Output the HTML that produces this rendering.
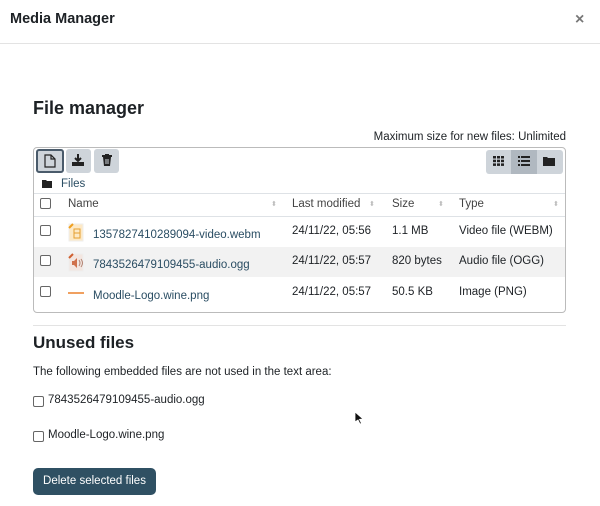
<!DOCTYPE html>
<html><head><meta charset="utf-8"><style>
*{box-sizing:border-box;margin:0;padding:0}
body{width:600px;height:506px;background:#fff;font-family:"Liberation Sans",sans-serif;color:#1d2125;position:relative;overflow:hidden;font-size:11.5px}
.a{position:absolute;white-space:nowrap}
.btn{position:absolute;background:#ced4da;border-radius:3px;height:24px;top:149px}
.cb{position:absolute;width:11px;height:11px;border:1px solid #666;border-radius:2px;background:#fff}
.hl{position:absolute;left:34px;width:531px;height:1px;background:#dee2e6}
.lnk{color:#2a4d63}
.sort{position:absolute;color:#bbb;font-size:7px}
</style></head><body>
<div class="a" style="left:10px;top:11px;font-size:14.5px;font-weight:bold">Media Manager</div>
<div class="a" style="left:575px;top:11px;font-size:16px;color:#777;font-weight:bold">×</div>
<div class="a" style="left:0;top:43px;width:600px;height:1px;background:#e3e3e3"></div>
<div class="a" style="left:33px;top:98px;font-size:18px;font-weight:bold">File manager</div>
<div class="a" style="right:34px;top:131px;font-size:11.5px">Maximum size for new files: Unlimited</div>
<div class="a" style="left:33px;top:147px;width:533px;height:166px;border:1px solid #bbb;border-radius:4px"></div>
<div class="btn" style="left:36px;width:28px;border:2px solid #4a5b6b;background:#ced4da"></div>
<svg class="a" style="left:44px;top:154px" width="12" height="14" viewBox="0 0 12 14"><path d="M1 1h6l4 4v8H1z M7 1v4h4" fill="none" stroke="#222" stroke-width="1.2"/></svg>
<div class="btn" style="left:66px;width:25px"></div>
<svg class="a" style="left:72px;top:154px" width="12" height="12" viewBox="0 0 12 12"><path d="M6 0v6M3 4l3 3 3-3" stroke="#222" stroke-width="2" fill="none"/><rect x="0" y="8" width="12" height="4" fill="#222"/></svg>
<div class="btn" style="left:94px;width:25px"></div>
<svg class="a" style="left:102px;top:154px" width="10" height="12" viewBox="0 0 10 12"><rect x="0" y="1" width="10" height="2" fill="#222"/><rect x="3" y="0" width="4" height="2" fill="#222"/><path d="M1 3h8l-1 9H2z" fill="#222"/><path d="M4 5v5M6 5v5" stroke="#ced4da"/></svg>
<div class="btn" style="left:486px;width:77px;top:150px"></div>
<div class="a" style="left:511px;top:150px;width:26px;height:24px;background:#b0b8c0"></div>
<svg class="a" style="left:493px;top:156px" width="11" height="10"><g fill="#222"><rect x="0" y="0" width="3" height="2.5"/><rect x="4" y="0" width="3" height="2.5"/><rect x="8" y="0" width="3" height="2.5"/><rect x="0" y="3.7" width="3" height="2.5"/><rect x="4" y="3.7" width="3" height="2.5"/><rect x="8" y="3.7" width="3" height="2.5"/><rect x="0" y="7.4" width="3" height="2.5"/><rect x="4" y="7.4" width="3" height="2.5"/><rect x="8" y="7.4" width="3" height="2.5"/></g></svg>
<svg class="a" style="left:518px;top:156px" width="12" height="10"><g fill="#222"><rect x="0" y="0" width="2" height="2"/><rect x="3" y="0" width="9" height="2"/><rect x="0" y="4" width="2" height="2"/><rect x="3" y="4" width="9" height="2"/><rect x="0" y="8" width="2" height="2"/><rect x="3" y="8" width="9" height="2"/></g></svg>
<svg class="a" style="left:543px;top:156px" width="12" height="10"><path d="M0 1h4l1 1h7v8H0z" fill="#222"/></svg>
<svg class="a" style="left:42px;top:180px" width="10" height="8"><path d="M0 0h4l1 1h5v7H0z" fill="#222"/></svg>
<div class="a lnk" style="left:61px;top:178px">Files</div>
<div class="hl" style="top:193px"></div>
<div class="cb" style="left:40px;top:198px"></div>
<div class="a" style="left:68px;top:198px;color:#444">Name</div><div class="sort" style="left:271px;top:200px">⬍</div>
<div class="a" style="left:292px;top:198px;color:#444">Last modified</div><div class="sort" style="left:369px;top:200px">⬍</div>
<div class="a" style="left:392px;top:198px;color:#444">Size</div><div class="sort" style="left:438px;top:200px">⬍</div>
<div class="a" style="left:459px;top:198px;color:#444">Type</div><div class="sort" style="left:553px;top:200px">⬍</div>
<div class="hl" style="top:216px"></div>
<div class="a" style="left:34px;top:247px;width:531px;height:30px;background:#f2f2f2"></div>
<div class="cb" style="left:40px;top:225px"></div>
<div class="cb" style="left:40px;top:255px"></div>
<div class="cb" style="left:40px;top:286px"></div>
<svg class="a" style="left:67px;top:222px" width="18" height="20"><rect x="2" y="2" width="14" height="17" fill="#fde9c6" stroke="#eee"/><path d="M2 6l4-4" stroke="#f0a020" stroke-width="2"/><rect x="7" y="7" width="6" height="9" fill="none" stroke="#e5a030"/><path d="M7 11h6" stroke="#e5a030"/></svg>
<svg class="a" style="left:67px;top:252px" width="18" height="20"><rect x="2" y="2" width="14" height="17" fill="#f3e6e0" stroke="#eee"/><path d="M2 6l4-4" stroke="#d06030" stroke-width="2"/><path d="M5 9h2l3-3v10l-3-3H5z" fill="#d0704a"/><path d="M12 8q2 3 0 6M14 7q3 4 0 8" stroke="#b08070" fill="none"/></svg>
<div class="a" style="left:68px;top:292px;width:16px;height:2px;background:#f0a060"></div>
<div class="a lnk" style="left:93px;top:229px">1357827410289094-video.webm</div>
<div class="a lnk" style="left:93px;top:259px">7843526479109455-audio.ogg</div>
<div class="a lnk" style="left:93px;top:290px">Moodle-Logo.wine.png</div>
<div class="a" style="left:292px;top:225px">24/11/22, 05:56</div>
<div class="a" style="left:292px;top:255px">24/11/22, 05:57</div>
<div class="a" style="left:292px;top:286px">24/11/22, 05:57</div>
<div class="a" style="left:392px;top:225px">1.1 MB</div>
<div class="a" style="left:392px;top:255px">820 bytes</div>
<div class="a" style="left:392px;top:286px">50.5 KB</div>
<div class="a" style="left:459px;top:225px">Video file (WEBM)</div>
<div class="a" style="left:459px;top:255px">Audio file (OGG)</div>
<div class="a" style="left:459px;top:286px">Image (PNG)</div>
<div class="a" style="left:33px;top:325px;width:533px;height:1px;background:#e3e3e3"></div>
<div class="a" style="left:33px;top:333px;font-size:17px;font-weight:bold">Unused files</div>
<div class="a" style="left:33px;top:366px">The following embedded files are not used in the text area:</div>
<div class="cb" style="left:33px;top:396px"></div>
<div class="a" style="left:48px;top:394px">7843526479109455-audio.ogg</div>
<div class="cb" style="left:33px;top:431px"></div>
<div class="a" style="left:48px;top:429px">Moodle-Logo.wine.png</div>
<svg class="a" style="left:354px;top:411px" width="9" height="14"><path d="M1 1v10l3-2 2 4 1.5-.7-2-4 3.5-.3z" fill="#111" stroke="#fff" stroke-width=".8"/></svg>
<div class="a" style="left:33px;top:468px;width:123px;height:27px;background:#2f5063;border-radius:5px;color:#fff;text-align:center;line-height:27px">Delete selected files</div>
</body></html>
